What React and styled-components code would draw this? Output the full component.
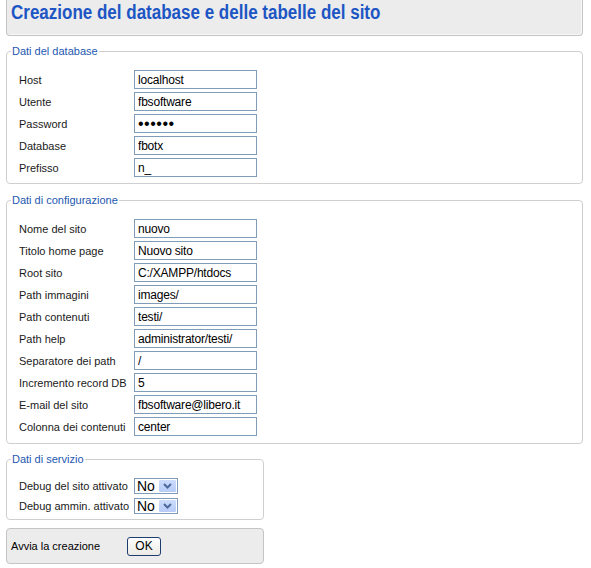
import React from "react"
import styled, { createGlobalStyle } from "styled-components"

const GlobalStyle = createGlobalStyle`
  body {
    margin: 0;
    background: #ffffff;
    font-family: "Liberation Sans", Arial, sans-serif;
    color: #000;
  }
`

const Page = styled.div`
  width: 577px;
  margin-left: 6px;
  display: flex;
  flex-direction: column;
  align-items: flex-start;
`

const Header = styled.div`
  box-sizing: border-box;
  width: 100%;
  height: 36px;
  background: #ececec;
  border: 1px solid #c4c4c4;
  border-top: none;
  border-radius: 0 0 4px 4px;
  box-shadow: inset -1px -1px 0 #f8f8f8;
  padding: 0 0 0 4px;
  overflow: hidden;
`

const Title = styled.h1`
  display: inline-block;
  margin: 0;
  font-size: 20px;
  line-height: 24px;
  font-weight: bold;
  color: #1d56c4;
  white-space: nowrap;
  transform: scaleX(0.85);
  transform-origin: left center;
`

const Fieldset = styled.fieldset`
  box-sizing: border-box;
  width: ${({ $width }) => $width || "100%"};
  margin: ${({ $top }) => $top}px 0 0 0;
  padding: 12px 8px ${({ $bottom }) => $bottom || 6}px 12px;
  border: 1px solid #cfcfcf;
  border-radius: 4px;
  min-width: 0;
`

const Legend = styled.legend`
  margin-left: -8px;
  padding: 0 1px;
  font-size: 11px;
  line-height: 13px;
  color: #2358b0;
`

const Rows = styled.div`
  display: grid;
  grid-template-columns: 115px 123px;
  row-gap: ${({ $gap }) => $gap}px;
  align-items: center;
`

const Label = styled.label`
  font-size: 11px;
  color: #1a1a1a;
  white-space: nowrap;
`

const Field = styled.input`
  box-sizing: border-box;
  width: 123px;
  height: 19px;
  margin: 0;
  padding: 0 3px;
  border: 1px solid #7f9db9;
  font-family: "Liberation Sans", Arial, sans-serif;
  font-size: ${({ type }) => (type === "password" ? "16px" : "12px")};
  letter-spacing: ${({ type }) => (type === "password" ? "0.5px" : "-0.2px")};
  color: #000;
  background: #fff;
  outline: none;
`

const SelectBox = styled.div`
  box-sizing: border-box;
  width: 44px;
  height: 16px;
  display: flex;
  align-items: stretch;
  border: 1px solid #7f9db9;
  background: #fff;
`

const Select = styled.select`
  appearance: none;
  flex: 1;
  min-width: 0;
  margin: 0;
  padding: 0 0 0 2px;
  border: none;
  background: transparent;
  font-family: "Liberation Sans", Arial, sans-serif;
  font-size: 14px;
  line-height: 14px;
  color: #000;
  outline: none;
`

const Arrow = styled.span`
  width: 17px;
  display: flex;
  align-items: center;
  justify-content: center;
  background: linear-gradient(#cddcfc, #b7cbf7);
  border: 1px solid #fff;
  border-radius: 2px;
`

const Footer = styled.div`
  box-sizing: border-box;
  width: 258px;
  height: 36px;
  margin-top: 8px;
  display: grid;
  grid-template-columns: 116px auto;
  align-items: center;
  padding-left: 4px;
  background: #ececec;
  border: 1px solid #c4c4c4;
  border-radius: 4px;
  font-size: 11px;
`

const Button = styled.button`
  box-sizing: border-box;
  width: 34px;
  height: 19px;
  padding: 0;
  border: 1px solid #1c3d6e;
  border-radius: 3px;
  background: linear-gradient(#ffffff, #ebeae4);
  font-family: "Liberation Sans", Arial, sans-serif;
  font-size: 12px;
  color: #000;
`

const database = [
  ["Host", "localhost"],
  ["Utente", "fbsoftware"],
  ["Password", "123456", "password"],
  ["Database", "fbotx"],
  ["Prefisso", "n_"],
]

const config = [
  ["Nome del sito", "nuovo"],
  ["Titolo home page", "Nuovo sito"],
  ["Root sito", "C:/XAMPP/htdocs"],
  ["Path immagini", "images/"],
  ["Path contenuti", "testi/"],
  ["Path help", "administrator/testi/"],
  ["Separatore dei path", "/"],
  ["Incremento record DB", "5"],
  ["E-mail del sito", "fbsoftware@libero.it"],
  ["Colonna dei contenuti", "center"],
]

const service = ["Debug del sito attivato", "Debug ammin. attivato"]

const Chevron = () => (
  <svg width="9" height="6" viewBox="0 0 9 6">
    <path d="M1 1 L4.5 4.5 L8 1" fill="none" stroke="#4d6a9e" strokeWidth="2" />
  </svg>
)

const FieldRows = ({ items }) => (
  <Rows $gap={3}>
    {items.map(([label, value, type]) => (
      <React.Fragment key={label}>
        <Label>{label}</Label>
        <Field type={type || "text"} defaultValue={value} />
      </React.Fragment>
    ))}
  </Rows>
)

const App = () => {
  return (
    <Page>
      <GlobalStyle />
      <Header>
        <Title>Creazione del database e delle tabelle del sito</Title>
      </Header>

      <Fieldset $top={9} $bottom={6}>
        <Legend>Dati del database</Legend>
        <FieldRows items={database} />
      </Fieldset>

      <Fieldset $top={10} $bottom={7}>
        <Legend>Dati di configurazione</Legend>
        <FieldRows items={config} />
      </Fieldset>

      <Fieldset $top={9} $bottom={5} $width="258px">
        <Legend>Dati di servizio</Legend>
        <Rows $gap={4}>
          {service.map(label => (
            <React.Fragment key={label}>
              <Label>{label}</Label>
              <SelectBox>
                <Select defaultValue="No">
                  <option>No</option>
                  <option>Si</option>
                </Select>
                <Arrow>
                  <Chevron />
                </Arrow>
              </SelectBox>
            </React.Fragment>
          ))}
        </Rows>
      </Fieldset>

      <Footer>
        <span>Avvia la creazione</span>
        <Button>OK</Button>
      </Footer>
    </Page>
  )
}

export default App
